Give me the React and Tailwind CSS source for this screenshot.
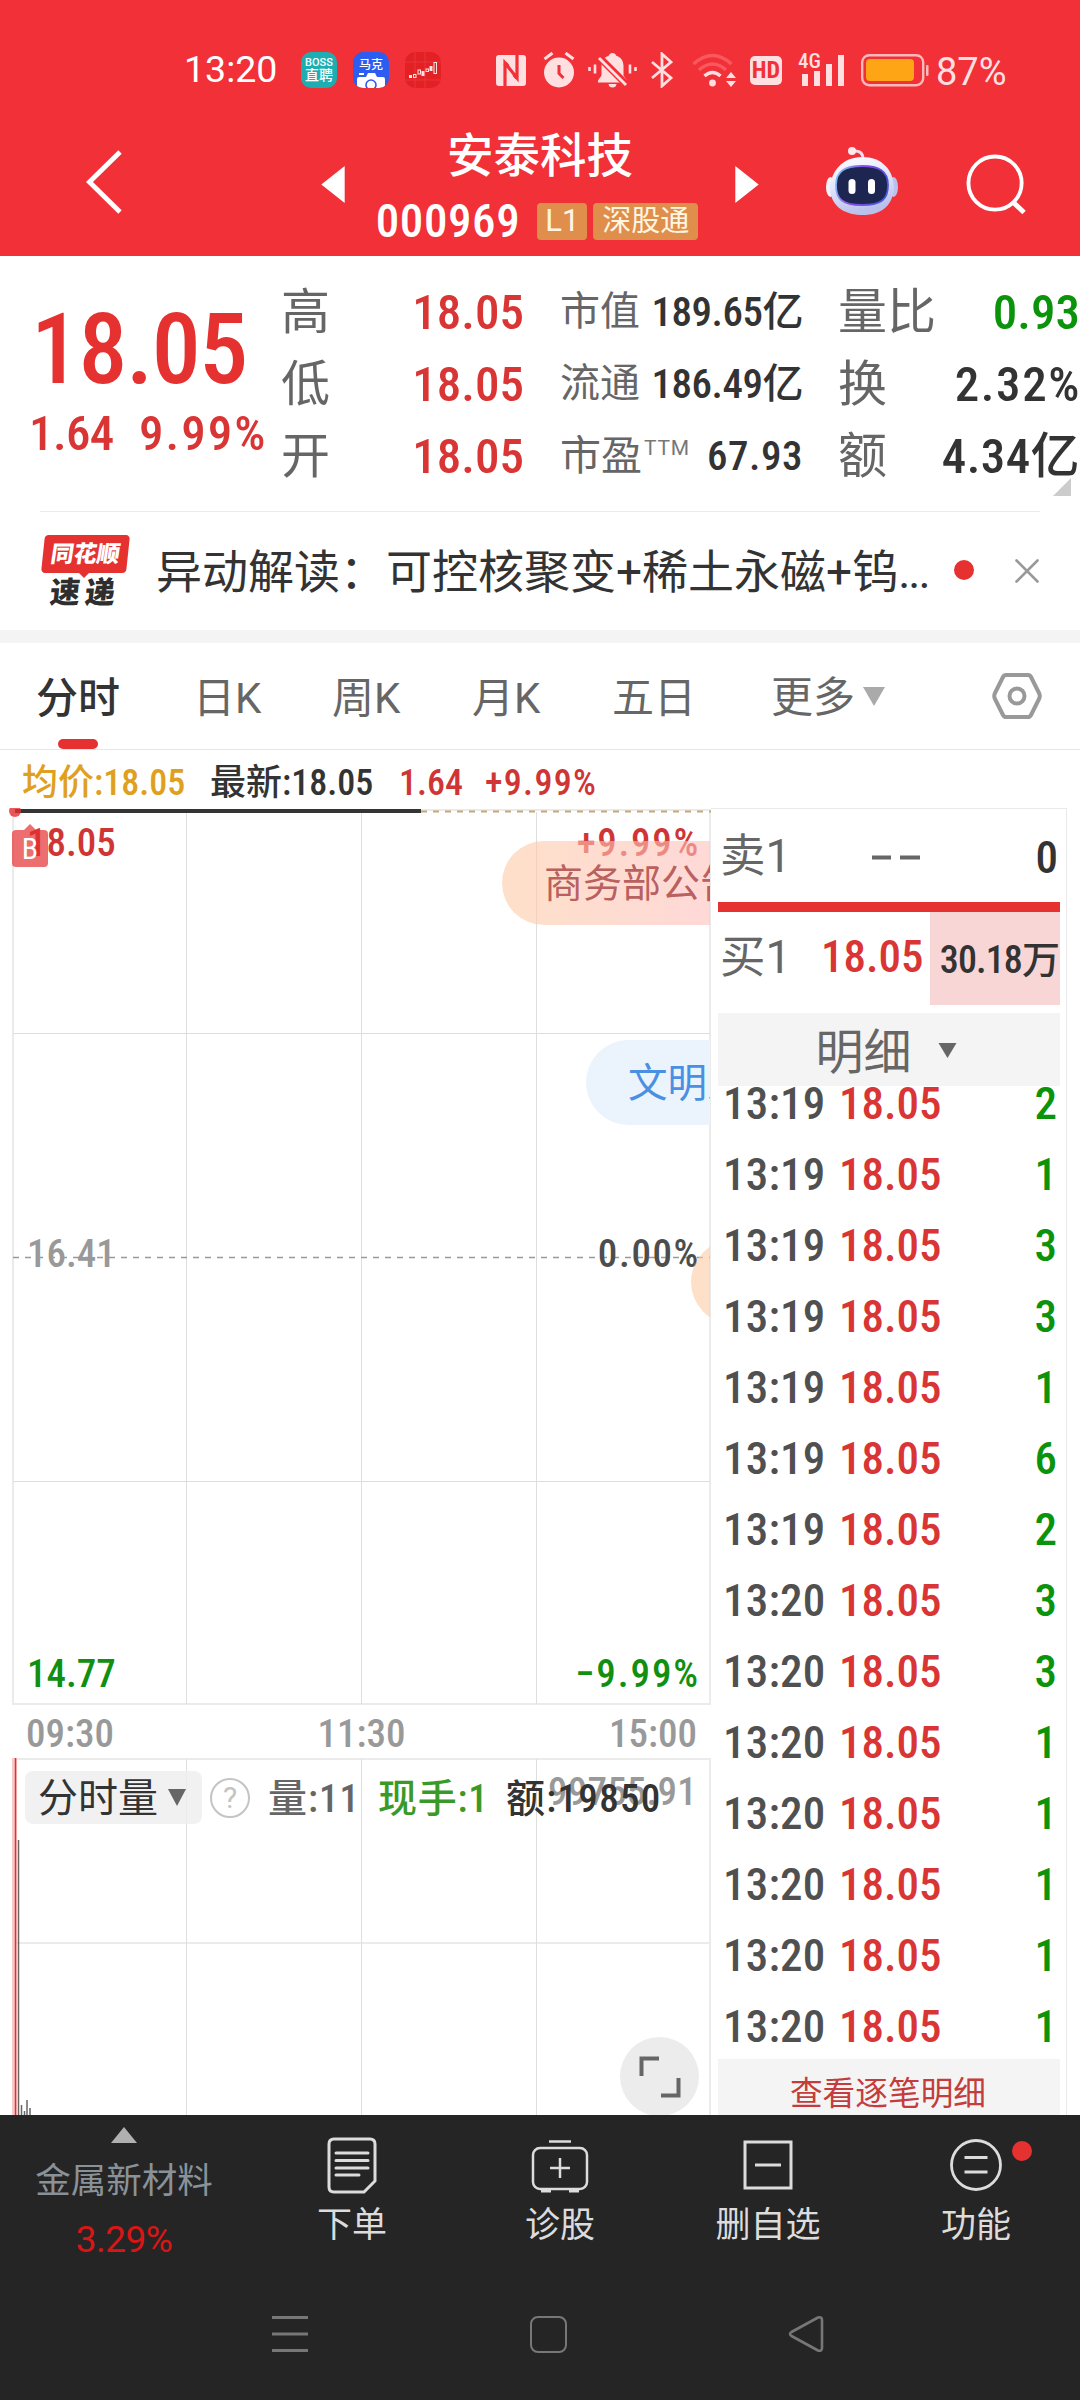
import React from 'react';

const quoteHigh = [
    { label: '高', value: '18.05' },
    { label: '低', value: '18.05' },
    { label: '开', value: '18.05' },
];

const quoteCap = [
    { label: '市值', value: '189.65亿' },
    { label: '流通', value: '186.49亿' },
];

const quoteTurnover = [
    { label: '量比', value: '0.93', color: 'text-[#0b930b]' },
    { label: '换', value: '2.32%', color: 'text-[#333333] tracking-[1.6px] -mr-[1px]' },
    { label: '额', value: '4.34亿', color: 'text-[#333333] tracking-[0.4px]' },
];

const trades = [
    ['13:19', 2], ['13:19', 1], ['13:19', 3], ['13:19', 3], ['13:19', 1], ['13:19', 6], ['13:19', 2],
    ['13:20', 3], ['13:20', 3], ['13:20', 1], ['13:20', 1], ['13:20', 1], ['13:20', 1], ['13:20', 1],
];

const StatusBar = () => (
    <div className="h-[140px] flex items-center text-white">
        <div className="w-[301px] pl-[184px] text-[37.5px] leading-none whitespace-nowrap">13:20</div>
        <div className="flex gap-4">
            <div className="w-9 h-9 rounded-[10px] bg-[#1eaeb2] flex flex-col items-center justify-center whitespace-nowrap">
                <div className="text-[11px] leading-[11px] font-medium">BOSS</div>
                <div className="text-[14px] leading-[15px] font-medium">直聘</div>
            </div>
            <div className="w-9 h-9 rounded-[10px] bg-[#2d5df0] flex flex-col items-center justify-between overflow-hidden">
                <div className="text-[12px] leading-[14px] mt-1.5 font-medium whitespace-nowrap">马克</div>
                <svg className="w-7 h-[15px]" viewBox="0 0 28 15">
                    <path d="M0 15V6q0-2 2-2h7l2-4h7l2 4h6q2 0 2 2v9z" fill="#fff" />
                    <rect x="2" y="0" width="5" height="2" fill="#fff" />
                    <circle cx="14" cy="12" r="5" fill="#fff" stroke="#2d5df0" strokeWidth="1.6" />
                </svg>
            </div>
            <div className="w-9 h-9 rounded-[10px] bg-[#e32125]">
                <svg className="w-9 h-9" viewBox="0 0 36 36" fill="none" stroke="#ffe3e3" strokeWidth="1">
                    <path d="M10 0v36M20 0v36M0 10h36M0 28h36" stroke="#e8363a" />
                    <path d="M4 24.500h3M18 19v5M26 14v5" strokeWidth="3" />
                    <rect x="8.500" y="22.500" width="2.500" height="3" />
                    <rect x="13" y="18" width="2.500" height="4" />
                    <rect x="21" y="17" width="2.500" height="2.500" />
                    <rect x="29" y="10.500" width="2.500" height="11" />
                </svg>
            </div>
        </div>

        <svg className="w-[30px] h-[31px] ml-[55px]" viewBox="0 0 30 31">
            <rect width="30" height="31" rx="3" fill="#ffdfe0" />
            <path d="M9 31V8l12 15V0" fill="none" stroke="#f13038" strokeWidth="3.200" />
            <path d="M9 8l3 3.500M18 19.500l3 3.500" stroke="#f13038" strokeWidth="4" />
        </svg>
        <svg className="w-8 h-9 ml-[17px]" viewBox="0 0 32 36">
            <circle cx="16" cy="20.500" r="15" fill="#ffdfe0" />
            <path d="M1.500 7l8-6M30.500 7l-8-6" stroke="#ffdfe0" strokeWidth="3" />
            <path d="M16 13v8.500l4.500 4.500" fill="none" stroke="#f13038" strokeWidth="3" />
        </svg>
        <svg className="w-[49px] h-9 ml-[13px]" viewBox="0 0 49 36">
            <path d="M24.500 1q3 0 3.500 2.500 7 2 7.500 10v10l3.500 5v2H10v-2l3.500-5v-10Q14 5.500 21 3.500 21.500 1 24.500 1z" fill="#ffdfe0" />
            <path d="M20.500 32h8q-.5 3.500-4 3.500t-4-3.500z" fill="#ffdfe0" />
            <path d="M10 4l28 28" stroke="#f13038" strokeWidth="7" />
            <path d="M11 6l27 27" stroke="#ffdfe0" strokeWidth="2.800" />
            <path d="M1.500 15v4M7 12.500v9M42 12.500v9M47.500 15v4" stroke="#ffdfe0" strokeWidth="2.600" />
        </svg>
        <svg className="w-[22px] h-9 ml-[14px]" viewBox="0 0 22 36" fill="none" stroke="#ffdfe0" strokeWidth="2.800">
            <path d="M1 10l19 16-9 8V2l9 8L1 26" />
        </svg>
        <svg className="w-[45px] h-9 ml-[19px]" viewBox="0 0 45 36" fill="none">
            <path d="M1.500 12q19-17 38 0" stroke="#fa575e" strokeWidth="3.500" />
            <path d="M7 18q13.500-12 27 0" stroke="#fa575e" strokeWidth="3.500" />
            <path d="M12.500 24q8-7 16 0" stroke="#ffdfe0" strokeWidth="3.500" />
            <circle cx="20.500" cy="31" r="3.400" fill="#ffdfe0" />
            <path d="M34 26l5-6 5 6zM34 29l5 6 5-6z" fill="#ffdfe0" />
        </svg>
        <div className="w-8 h-[29px] ml-[13px] rounded-[5px] bg-[#ffdfe0] text-[#f13038] text-[24px] leading-[29px] text-center font-bold font-['Roboto_Condensed','Noto_Sans_CJK_SC',sans-serif]">HD</div>
        <div className="w-[47px] h-9 ml-[17px] relative">
            <svg className="w-[47px] h-9" viewBox="0 0 47 36" fill="#ffdfe0">
                <path d="M3 22h6v12H3zM15 19h6v15h-6zM27 12h6v22h-6zM39 3h6v31h-6z" />
            </svg>
            <div className="absolute -left-px top-0 text-[21px] leading-[18px] text-[#ffdfe0] font-medium font-['Roboto_Condensed','Noto_Sans_CJK_SC',sans-serif]">4G</div>
        </div>
        <svg className="w-[68px] h-[33px] ml-[15px]" viewBox="0 0 68 33">
            <rect x="1.200" y="1.200" width="61" height="30" rx="7" fill="none" stroke="#ffb9bb" strokeWidth="2.400" />
            <rect x="5" y="5" width="48" height="22" rx="4" fill="#fea515" />
            <rect x="65" y="11" width="2.500" height="11" rx="1" fill="#ffb9bb" />
        </svg>
        <div className="ml-[7px] mt-1 text-[38px] leading-none text-[#ffdfe0]">87%</div>
    </div>
);

const Robot = () => (
    <svg className="w-[72px] h-[68px] ml-[67px]" viewBox="0 0 72 68">
        <defs>
            <linearGradient id="shell" x1="0" y1="0" x2="0.300" y2="1">
                <stop offset="0" stopColor="#ffffff" />
                <stop offset="0.500" stopColor="#e4e6fa" />
                <stop offset="1" stopColor="#b9c0ea" />
            </linearGradient>
            <linearGradient id="rim" x1="0" y1="0" x2="1" y2="0.300">
                <stop offset="0" stopColor="#7fd8f8" />
                <stop offset="0.500" stopColor="#8a4be8" />
                <stop offset="1" stopColor="#4b55d8" />
            </linearGradient>
        </defs>
        <path d="M27 4q10-1 10 8" fill="none" stroke="#f3dcea" strokeWidth="3" />
        <circle cx="26" cy="4" r="4" fill="#ffe9ee" />
        <ellipse cx="4.500" cy="40" rx="4.500" ry="10" fill="#f1f1fc" />
        <ellipse cx="67.500" cy="40" rx="4.500" ry="10" fill="#b9c1ee" />
        <path d="M36 10C56 10 68 23 68 42 66 60 54 68 37 68S6 61 4 43C4 24 17 10 36 10z" fill="url(#shell)" />
        <path d="M36 19c17 0 26 5 26 19s-6 20-26 20-26-6-26-20 9-19 26-19z" fill="#1d2650" stroke="url(#rim)" strokeWidth="1.800" />
        <rect x="22.500" y="32" width="7" height="15" rx="3.500" fill="#fff" />
        <rect x="42" y="32" width="7" height="15" rx="3.500" fill="#fff" />
    </svg>
);

const Header = () => (
    <div className="bg-[#f13038] h-[256px]">
        <StatusBar />
        <div className="h-[116px] flex text-white">
            <svg className="w-[38px] h-[66px] ml-[85px] mt-[9px]" viewBox="0 0 38 68" fill="none" stroke="#fff" strokeWidth="5">
                <path d="M35.500 3L4 34l31.500 31" />
            </svg>
            <svg className="w-6 h-[37px] ml-[198px] mt-[26px]" viewBox="0 0 24 38"><path d="M24 0v38L0 19z" fill="#fff" /></svg>
            <div className="w-[390px] flex flex-col items-center -mt-2">
                <div className="text-[46.5px] leading-[48px] font-medium">安泰科技</div>
                <div className="mt-[23px] h-[37px] flex items-center -ml-1.5">
                    <div className="text-[47px] leading-none font-medium tracking-[0.6px] -mt-0.5 font-['Roboto_Condensed','Noto_Sans_CJK_SC',sans-serif]">000969</div>
                    <div className="ml-[17px] w-[50px] h-[37px] rounded bg-[#e08e4b] text-[#fff6e2] text-[31px] leading-[36px] text-center">L1</div>
                    <div className="ml-1.5 w-[105px] h-[37px] rounded bg-[#e08e4b] text-[#fff6e2] text-[29px] leading-[37px] text-center">深股通</div>
                </div>
            </div>
            <svg className="w-6 h-[37px] mt-[26px]" viewBox="0 0 24 38"><path d="M0 0v38l24-19z" fill="#fff" /></svg>
            <div className="mt-[7px]"><Robot /></div>
            <svg className="w-[60px] h-[62px] ml-[68px] mt-[14px]" viewBox="0 0 62 64" fill="none" stroke="#fff" strokeWidth="4">
                <circle cx="30" cy="30" r="27.500" />
                <path d="M48.500 49.500l11.500 11" strokeWidth="5" />
            </svg>
        </div>
    </div>
);

const Quote = () => (
    <div className="relative h-[255px] flex overflow-hidden font-medium font-['Roboto_Condensed','Noto_Sans_CJK_SC',sans-serif]">
        <div className="w-[282px] pt-11 text-[#e63131] whitespace-nowrap">
            <div className="pl-[31px] text-[98px] leading-[100px] tracking-[-1.5px]">18.05</div>
            <div className="mt-[9px] pl-[29px] text-[49px] leading-[50px] text-[#d93535] flex">
                <span className="w-[110px] tracking-[-0.6px]">1.64</span>
                <span className="tracking-[2px]">9.99%</span>
            </div>
        </div>
        <div className="w-[242px] pt-5">
            {quoteHigh.map((q) => (
                <div key={q.label} className="h-[72px] flex items-center justify-between text-[49px] leading-none">
                    <span className="font-normal text-[#666666] -ml-px mt-px">{q.label}</span>
                    <span className="text-[#d93535]">{q.value}</span>
                </div>
            ))}
        </div>
        <div className="ml-[36px] w-[243px] pt-5">
            {quoteCap.map((q) => (
                <div key={q.label} className="h-[72px] flex items-center justify-between text-[41px] leading-none whitespace-nowrap">
                    <span className="font-normal text-[40px] text-[#666666]">{q.label}</span>
                    <span className="text-[#333333] tracking-[-0.5px]">{q.value}</span>
                </div>
            ))}
            <div className="h-[72px] flex items-center text-[41px] leading-none">
                <span className="font-normal text-[#666666]">市盈</span>
                <span className="font-normal text-[#777777] text-[21px] mb-4 ml-0.5 tracking-[0.8px] font-['Roboto','Noto_Sans_CJK_SC',sans-serif]">TTM</span>
                <span className="text-[#333333] ml-auto tracking-[0.5px]">67.93</span>
            </div>
        </div>
        <div className="ml-9 w-[241px] pt-5">
            {quoteTurnover.map((q) => (
                <div key={q.label} className="h-[72px] flex items-center justify-between text-[49px] leading-none whitespace-nowrap">
                    <span className="font-normal text-[#666666] -ml-px mt-px">{q.label}</span>
                    <span className={q.color}>{q.value}</span>
                </div>
            ))}
        </div>
        <svg className="absolute right-[9px] top-[222px] w-[18px] h-[18px]" viewBox="0 0 18 18"><path d="M18 0v18H0z" fill="#cccccc" /></svg>
    </div>
);

const News = () => (
    <div className="h-[119px] mx-10 border-t border-[#ececec] flex items-center">
        <div className="w-[90px] h-[72px] relative">
            <div className="w-[85px] h-[38px] ml-[3px] rounded-[4px] bg-[#e63131] -skew-x-6 text-white text-[23px] leading-[39px] text-center font-black">
                <span className="inline-block -skew-x-3">同花顺</span>
            </div>
            <div className="pl-[10px] mt-px text-[30px] leading-[37px] font-black text-[#2e2e2e] flex gap-[5px] -skew-x-6"><span>速</span><span>递</span></div>
            <svg className="absolute left-[38px] top-[37px] w-3 h-1.5" viewBox="0 0 12 6"><path d="M0 0h12L6 6z" fill="#e63131" /></svg>
        </div>
        <div className="ml-[26px] w-[798px] mt-0.5 text-[46px] leading-[60px] whitespace-nowrap text-[#333333]">异动解读：可控核聚变+稀土永磁+钨<span className="tracking-[-2px]">...</span></div>
        <div className="w-5 h-5 -mt-0.5 rounded-full bg-[#e63131]"></div>
        <svg className="w-6 h-6 ml-[41px]" viewBox="0 0 24 24" stroke="#999999" strokeWidth="2.600" strokeLinecap="round"><path d="M1.500 1.500l21 21M22.500 1.500l-21 21" /></svg>
    </div>
);

const Tabs = () => (
    <div className="h-[107px] border-b border-[#e6e6e6] flex text-[42px] leading-[111px] text-[#666666] whitespace-nowrap">
        <div className="relative w-[160px] pl-9 font-medium text-[#333333]">
            分时
            <div className="absolute left-[58px] bottom-0 w-10 h-2.5 rounded-full bg-[#e63131]"></div>
        </div>
        <div className="w-[137px] pl-[33px]">日K</div>
        <div className="w-[140px] pl-[35px]">周K</div>
        <div className="w-[141px] pl-[35px]">月K</div>
        <div className="w-[156px] pl-[34px]">五日</div>
        <div className="pl-[37px] flex items-center">
            <span className="mt-0.5">更多</span>
            <svg className="w-[22px] h-[19px] ml-[8px]" viewBox="0 0 22 19"><path d="M0 0h22L11 19z" fill="#aaaaaa" /></svg>
        </div>
        <svg className="w-[50px] h-12 ml-auto mr-[38px] mt-[29px]" viewBox="0 0 50 48" fill="none" stroke="#999999" strokeWidth="4" strokeLinejoin="round">
            <path d="M14 3h22q2 0 3 2l8 16q1.500 3 0 6l-8 16q-1 2-3 2H14q-2 0-3-2L3 27q-1.500-3 0-6l8-16q1-2 3-2z" />
            <circle cx="25" cy="24" r="7.500" />
        </svg>
    </div>
);

const PriceChart = () => (
    <div className="relative h-[897px] overflow-hidden text-[39px] leading-[40px] font-medium font-['Roboto_Condensed','Noto_Sans_CJK_SC',sans-serif]">
        <svg className="w-[711px] h-[897px]" viewBox="0 0 711 897" fill="none">
            <path d="M13 1v896M710 1v896" stroke="#ebebeb" strokeWidth="2" />
            <path d="M12 2h699M12 896h699" stroke="#ebebeb" strokeWidth="2" />
            <path d="M186.500 4v892M361.500 4v892M536.500 4v892M13 225.500h697M13 673.500h697" stroke="#dedede" />
            <path d="M13 449.500h697" stroke="#999999" strokeWidth="1.500" strokeDasharray="6 6" />
            <path d="M421 3.500h290" stroke="#c3a878" strokeWidth="2" strokeDasharray="6 6" />
            <path d="M15 3h406" stroke="#333533" strokeWidth="4" />
            <circle cx="15" cy="3" r="6" fill="#e63131" fillOpacity="0.800" />
        </svg>
        <div className="absolute left-[27px] top-[15px] text-[#d03535]">18.05</div>
        <div className="absolute right-[11px] top-[15px] text-[#d03535] tracking-[1.7px]">+9.99%</div>
        <div className="absolute left-[27px] top-[426px] text-[#999999]">16.41</div>
        <div className="absolute right-[11px] top-[426px] text-[#4d4d4d] tracking-[1.6px]">0.00%</div>
        <div className="absolute left-[27px] top-[846px] text-[#118f11]">14.77</div>
        <div className="absolute right-[11px] top-[846px] text-[#118f11] tracking-[1.9px]">−9.99%</div>

        {/* buy point marker */}
        <div className="absolute left-3 top-[22px] w-[36px] h-[37px] rounded bg-[#e63131]/70 text-white text-[30px] leading-[38px] text-center font-normal">B</div>
        <svg className="absolute left-[24px] top-[16px] w-3 h-1.5" viewBox="0 0 12 6"><path d="M0 6h12L6 0z" fill="#e63131" fillOpacity="0.700" /></svg>

        {/* scrolling news bubbles, clipped by the chart's right border */}
        <div className="absolute left-0 top-0 w-[710px] h-[897px] overflow-hidden">
            <div className="absolute left-[502px] top-[33px] w-[320px] h-[84px] rounded-full bg-linear-to-r from-[#fdcba5]/60 to-[#ffc0bb]/60 to-60% pl-[42px] text-[39px] leading-[87px] text-[#b14f4f]/90 whitespace-nowrap font-normal">商务部公告</div>
            <div className="absolute left-[586px] top-[232px] w-[300px] h-[85px] rounded-full bg-[#ebf3fd] pl-[42px] text-[39.5px] leading-[88px] text-[#4a90e2] whitespace-nowrap font-normal">文明人</div>
            <div className="absolute left-[691px] top-[432px] w-[300px] h-[84px] rounded-full bg-[#fdcba5]/60"></div>
        </div>
    </div>
);

const VolumeChart = () => (
    <div className="relative h-[358px] overflow-hidden text-[39px] leading-[40px] font-medium font-['Roboto_Condensed','Noto_Sans_CJK_SC',sans-serif]">
        <svg className="w-[711px] h-[358px]" viewBox="0 0 711 358" fill="none">
            <path d="M12 2h699M12 186h699M710 1v357" stroke="#ebebeb" strokeWidth="2" />
            <path d="M186.500 2v356M361.500 2v356M536.500 2v356" stroke="#dedede" />
            <path d="M14.500 1v357" stroke="#fbc9c9" strokeWidth="5" />
            <path d="M15.500 1v357" stroke="#d93535" strokeWidth="1.500" />
            <path d="M18.500 83v275M21.500 348v10M24.500 354v4M27 343v15M30 351v7" stroke="#666666" strokeWidth="1.500" />
        </svg>
        <div className="absolute right-[14px] top-[15px] text-[#999999] tracking-[0.2px]">99755.91</div>
        <div className="absolute left-[25px] top-[14px] h-[53px] flex items-center whitespace-nowrap">
            <div className="w-[177px] h-[53px] rounded-lg bg-[#eeeeee]/80 flex items-center pl-[13px] text-[#333333]">
                <span className="text-[40px] font-normal mt-0.5">分时量</span>
                <svg className="w-[18px] h-[17px] ml-[10px]" viewBox="0 0 18 17"><path d="M0 0h18L9 17z" fill="#666666" /></svg>
            </div>
            <div className="ml-2 w-10 h-10 rounded-full border-[2.5px] border-[#c4c4c4] text-[#c4c4c4] text-[30px] leading-[35px] text-center font-normal font-['Roboto','Noto_Sans_CJK_SC',sans-serif]">?</div>
            <div className="ml-[18px] w-[110px] mt-0.5 text-[#666666] tracking-[1px]">量:11</div>
            <div className="w-[128px] mt-0.5 text-[#3a9a28] tracking-[0.8px]">现手:1</div>
            <div className="mt-0.5 text-[#333333] tracking-[1.3px]">额:19850</div>
        </div>
        <div className="absolute left-[620px] top-[280px] w-[79px] h-[79px] rounded-full bg-[#ececec] flex items-center justify-center">
            <svg className="w-[42px] h-[42px]" viewBox="0 0 42 42" fill="none" stroke="#666666" strokeWidth="4">
                <path d="M2.500 20V2.500h17.500M22 39.500h17.500V22" />
            </svg>
        </div>
    </div>
);

const OrderBook = () => (
    <div className="mt-[58px] w-[356px] h-[1307px] border-t border-r border-[#e9e9e9] pl-[7px] pr-[6px] overflow-hidden font-['Roboto_Condensed','Noto_Sans_CJK_SC',sans-serif]">
        <div className="h-[93px] flex items-center pl-0.5 pr-0.5 text-[45px] leading-none text-[#666666]">
            <span className="w-[152px] text-[45.5px] mt-0.5 font-['Roboto','Noto_Sans_CJK_SC',sans-serif]">卖1</span>
            <svg className="w-12 h-[5px] mt-1" viewBox="0 0 48 5"><path d="M0 2.500h19M28 2.500h20" stroke="#666666" strokeWidth="4" /></svg>
            <span className="ml-auto text-[#333333] font-medium mt-1">0</span>
        </div>
        <div className="h-2.5 bg-[#e63131]"></div>
        <div className="h-[93px] flex items-center pl-0.5 leading-none whitespace-nowrap">
            <span className="w-[101px] text-[45.5px] text-[#666666] pb-0.5 font-['Roboto','Noto_Sans_CJK_SC',sans-serif]">买1</span>
            <span className="w-[109px] text-[45px] font-medium text-[#d93535] pb-1">18.05</span>
            <div className="w-[130px] h-[93px] bg-[#f9d6d6] text-[#333333] text-[38px] leading-[96px] text-right font-medium pr-px tracking-[-0.9px]">30.18万</div>
        </div>
        <div className="mt-2 h-[73px] bg-[#f4f4f4] flex items-center justify-center gap-[26px] text-[48px] leading-none text-[#666666] pr-[6px]">
            <span className="mt-1.5">明细</span>
            <svg className="w-[19px] h-[15px] mt-0.5" viewBox="0 0 18 15"><path d="M0 0h18L9 15z" fill="#666666" /></svg>
        </div>
        <div className="-mt-[18px] pl-[5px] pr-[3px] text-[45px] leading-none font-medium">
            {trades.map(([time, lots], i) => (
                <div key={i} className="h-[71px] flex items-center">
                    <span className="w-[116px] text-[#505050] tracking-[0.2px]">{time}</span>
                    <span className="text-[#d93535]">18.05</span>
                    <span className="ml-auto text-[#0b930b]">{lots}</span>
                </div>
            ))}
        </div>
        <div className="-mt-[3px] h-[80px] bg-[#f4f4f4] text-center text-[32.7px] leading-[71px] pr-0.5 text-[#c43c3c]">查看逐笔明细</div>
    </div>
);

const BottomBar = () => (
    <div className="h-[285px] bg-[#252525] text-[#dcdcdc]">
        <div className="h-[155px] flex text-center text-[35px] leading-[40px]">
            <div className="w-[248px] flex flex-col items-center">
                <svg className="w-[26px] h-4 mt-[12px]" viewBox="0 0 26 16"><path d="M13 0l13 16H0z" fill="#b0b0b0" /></svg>
                <div className="mt-[18px] text-[#8a9299] text-[35.5px]">金属新材料</div>
                <div className="mt-[19px] text-[#d81616] text-[37px] tracking-[-0.5px]">3.29%</div>
            </div>
            <div className="w-[208px] flex flex-col items-center">
                <svg className="w-[50px] h-[57px] mt-[22px]" viewBox="0 0 50 57" fill="none" stroke="#dcdcdc" strokeWidth="3">
                    <path d="M7 2h36q5 0 5 5v37L37 55H7q-5 0-5-5V7q0-5 5-5z" />
                    <path d="M9 16h32M9 23.500h32M9 31h32M9 38h23" strokeLinecap="round" />
                </svg>
                <div className="mt-[12px]">下单</div>
            </div>
            <div className="w-[208px] flex flex-col items-center">
                <svg className="w-[58px] h-[54px] mt-[24px]" viewBox="0 0 58 54" fill="none" stroke="#dcdcdc" strokeWidth="2.500">
                    <rect x="2" y="9" width="54" height="41" rx="7" />
                    <path d="M18 2.500h22M29 19v20M19 29h20" />
                    <path d="M10 52h10M38 52h10" strokeWidth="3" />
                </svg>
                <div className="mt-[13px]">诊股</div>
            </div>
            <div className="w-[208px] flex flex-col items-center">
                <svg className="w-[50px] h-[50px] mt-[25px]" viewBox="0 0 50 50" fill="none" stroke="#dcdcdc" strokeWidth="3">
                    <rect x="2" y="2" width="46" height="46" />
                    <path d="M12 25h26" />
                </svg>
                <div className="mt-[16px]">删自选</div>
            </div>
            <div className="w-[208px] flex flex-col items-center relative">
                <svg className="w-[52px] h-[54px] mt-[23px]" viewBox="0 0 52 54" fill="none" stroke="#dcdcdc" strokeWidth="2.800">
                    <circle cx="26" cy="27" r="24.500" />
                    <path d="M14.500 19.500h23M14.500 34h23" />
                </svg>
                <div className="mt-[14px]">功能</div>
                <div className="absolute left-[140px] top-[26px] w-5 h-5 rounded-full bg-[#e63131]"></div>
            </div>
        </div>
        <div className="h-[128px] pl-[161px] flex items-center">
            <div className="w-[258px] flex justify-center">
                <svg className="w-9 h-[38px]" viewBox="0 0 36 38" stroke="#777777" strokeWidth="3"><path d="M0 2.500h36M0 19h36M0 35.500h36" /></svg>
            </div>
            <div className="w-[258px] flex justify-center">
                <div className="w-[37px] h-[37px] rounded-[8px] border-[2.5px] border-[#777777]"></div>
            </div>
            <div className="w-[258px] flex justify-center">
                <svg className="w-9 h-[38px]" viewBox="0 0 36 38" fill="none" stroke="#777777" strokeWidth="2.600" strokeLinejoin="round"><path d="M30 2.500L3.500 17q-3 2 0 4L30 35.500q4 1 4-2.500V5q0-3.500-4-2.500z" /></svg>
            </div>
        </div>
    </div>
);

export default function App() {
    return (
        <div className="w-[1080px] h-[2400px] overflow-hidden bg-white font-['Roboto','Noto_Sans_CJK_SC',sans-serif]">
            <Header />
            <Quote />
            <News />
            <div className="h-[13px] bg-[#f4f4f4]"></div>
            <Tabs />
            <div className="h-[1365px] flex">
                <div className="w-[711px]">
                    <div className="h-[58px] pt-2 pl-[22px] flex items-center text-[36px] leading-none font-medium whitespace-nowrap font-['Roboto_Condensed','Noto_Sans_CJK_SC',sans-serif]">
                        <span className="w-[188px] text-[#dfa020]">均价:18.05</span>
                        <span className="w-[189px] text-[#333333]">最新:18.05</span>
                        <span className="w-[86px] text-[#d03535]">1.64</span>
                        <span className="text-[#d03535] tracking-[1.3px]">+9.99%</span>
                    </div>
                    <PriceChart />
                    <div className="h-[52px] pl-[26px] pr-[14px] pt-1.5 flex items-center justify-between text-[39px] leading-none font-medium text-[#999999] font-['Roboto_Condensed','Noto_Sans_CJK_SC',sans-serif]">
                        <span>09:30</span>
                        <span>11:30</span>
                        <span>15:00</span>
                    </div>
                    <VolumeChart />
                </div>
                <OrderBook />
            </div>
            <BottomBar />
        </div>
    );
}
